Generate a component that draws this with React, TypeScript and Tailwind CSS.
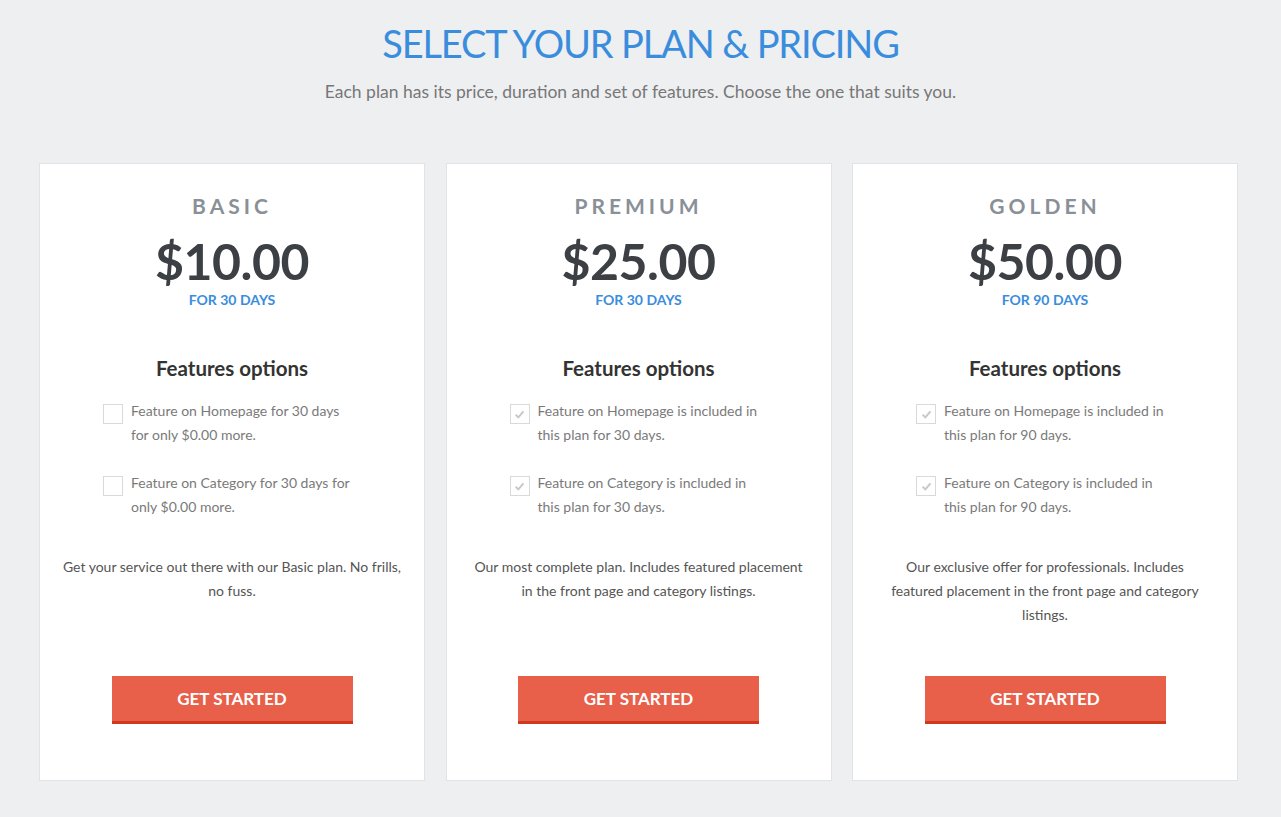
import React from 'react';

type Plan = {
  name: string;
  price: string;
  days: string;
  included: boolean;
  features: string[][];
  description: string[];
};

const plans: Plan[] = [
  {
    name: 'BASIC',
    price: '$10.00',
    days: 'FOR 30 DAYS',
    included: false,
    features: [
      ['Feature on Homepage for 30 days', 'for only $0.00 more.'],
      ['Feature on Category for 30 days for', 'only $0.00 more.'],
    ],
    description: ['Get your service out there with our Basic plan. No frills,', 'no fuss.'],
  },
  {
    name: 'PREMIUM',
    price: '$25.00',
    days: 'FOR 30 DAYS',
    included: true,
    features: [
      ['Feature on Homepage is included in', 'this plan for 30 days.'],
      ['Feature on Category is included in', 'this plan for 30 days.'],
    ],
    description: [
      'Our most complete plan. Includes featured placement',
      'in the front page and category listings.',
    ],
  },
  {
    name: 'GOLDEN',
    price: '$50.00',
    days: 'FOR 90 DAYS',
    included: true,
    features: [
      ['Feature on Homepage is included in', 'this plan for 90 days.'],
      ['Feature on Category is included in', 'this plan for 90 days.'],
    ],
    description: [
      'Our exclusive offer for professionals. Includes',
      'featured placement in the front page and category',
      'listings.',
    ],
  },
];

function Lines({ lines }: { lines: string[] }) {
  return (
    <>
      {lines.map((l, i) => (
        <React.Fragment key={l}>
          {i > 0 && <br />}
          {l}
        </React.Fragment>
      ))}
    </>
  );
}

function CheckBox({ checked }: { checked: boolean }) {
  return (
    <span className="mt-[5px] flex h-5 w-5 shrink-0 items-center justify-center border border-[#d9d9d9] bg-white">
      {checked && (
        <svg width="11" height="11" viewBox="0 0 10 10" aria-hidden>
          <path d="M1.5 5.2 L4 7.6 L8.6 2.2" fill="none" stroke="#c8c8c8" strokeWidth="1.8" />
        </svg>
      )}
    </span>
  );
}

function PlanCard({ plan }: { plan: Plan }) {
  return (
    <div className="flex h-[618px] w-[386px] flex-col border border-[#e2e3e5] bg-white px-4 pb-[56px] pt-[28px] text-center">
      <div className="text-[21px] font-bold leading-[28px] tracking-[0.19em] text-[#8a9097]">
        {plan.name}
      </div>
      <div className="mt-[13px] text-[50px] font-bold leading-[56px] tracking-[-0.01em] text-[#3c4044]">
        {plan.price}
      </div>
      <div className="mt-[2px] text-[14px] font-bold leading-[18px] text-[#3a8ddd]">{plan.days}</div>

      <div className="mt-[45px] text-[20.5px] font-bold leading-[28px] text-[#333]">
        Features options
      </div>
      <ul className="mx-auto mt-[17px] flex w-[258px] flex-col gap-6 text-left">
        {plan.features.map((f) => (
          <li key={f[0]} className="flex gap-2">
            <CheckBox checked={plan.included} />
            <span className="whitespace-nowrap text-[14px] leading-6 text-[#7a7a7a]">
              <Lines lines={f} />
            </span>
          </li>
        ))}
      </ul>

      <p className="mt-9 whitespace-nowrap text-[14px] leading-6 text-[#555]">
        <Lines lines={plan.description} />
      </p>

      <button className="mx-auto mt-auto h-12 w-[241px] border-b-[3px] border-[#cf3a1f] bg-[#e8604a] text-[17px] font-bold text-white">
        GET STARTED
      </button>
    </div>
  );
}

export default function App() {
  return (
    <div
      className="min-h-[817px] bg-[#eeeff1] pb-9"
      style={{ fontFamily: 'Lato, "Noto Sans", sans-serif' }}
    >
      <div className="pt-[19px] text-center">
        <h1 className="text-[38px] font-normal leading-[48px] tracking-[-0.03em] text-[#3a8ddd]">
          SELECT YOUR PLAN &amp; PRICING
        </h1>
        <p className="mt-[12px] text-[17.5px] leading-[26px] text-[#777]">
          Each plan has its price, duration and set of features. Choose the one that suits you.
        </p>
      </div>
      <div className="mt-[58px] flex gap-[20.5px] pl-[39px]">
        {plans.map((p) => (
          <PlanCard key={p.name} plan={p} />
        ))}
      </div>
    </div>
  );
}
